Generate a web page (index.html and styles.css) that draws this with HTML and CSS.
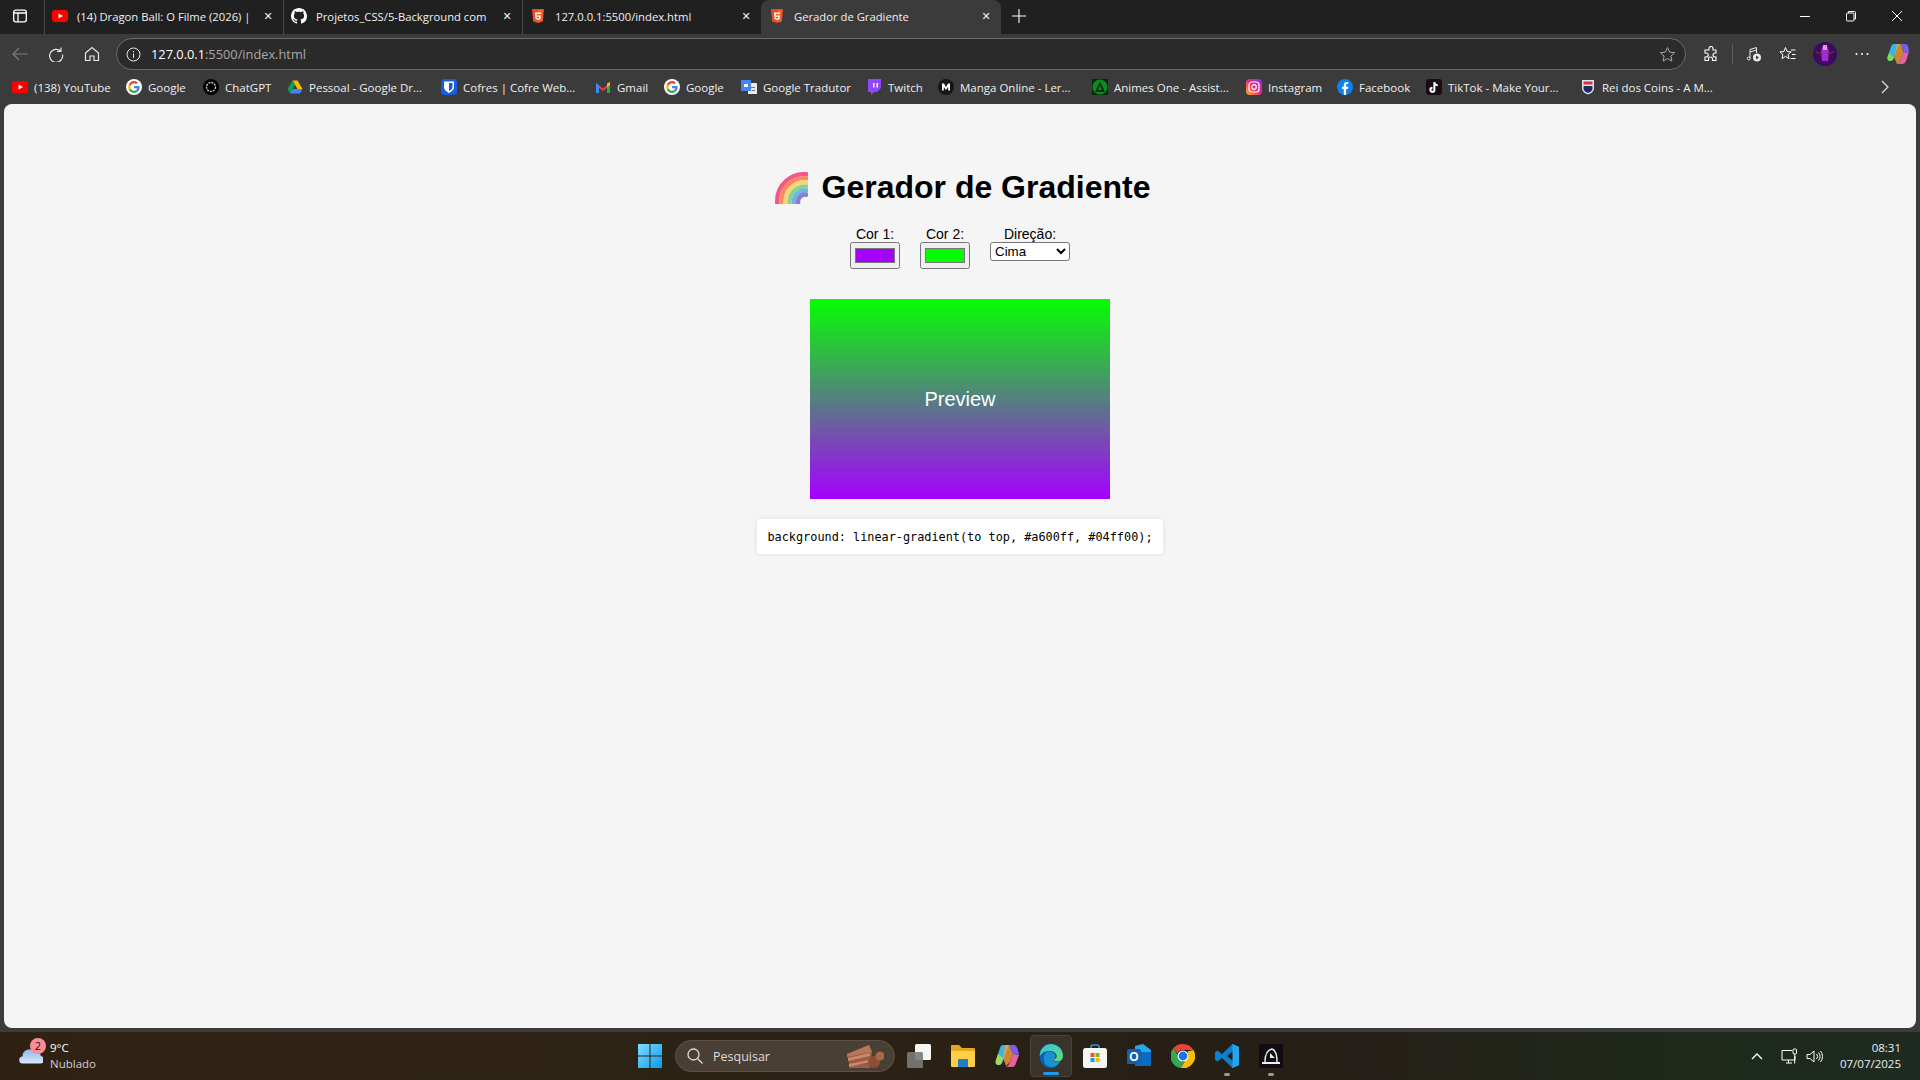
FILE: index.html
```html
<!DOCTYPE html>
<html lang="pt-BR">
<head>
<meta charset="UTF-8" />
<title>Gerador de Gradiente</title>
<link rel="stylesheet" href="styles.css">
</head>
<body>
<svg class="sprites" width="0" height="0">
  <symbol id="html5" viewBox="0 0 16 16"><path fill="#e44d26" d="M2 1h12l-1.100 12.400L8 15l-4.900-1.600z"/><path fill="#f16529" d="M8 2v12l4-1.200L13 2z"/><path fill="#fff" d="M5 4.500h6l-.1 1.500H6.600l.1 1.500h4.100l-.3 3.600L8 11.900l-2.500-.8-.2-1.900h1.400l.1 1 1.200.3 1.200-.3.1-1.400H5.300z"/></symbol>
  <symbol id="google" viewBox="0 0 16 16"><circle cx="8" cy="8" r="8" fill="#fff"/><path fill="#4285f4" d="M13.600 8.200c0-.4 0-.8-.1-1.200H8v2.300h3.200c-.1.800-.6 1.400-1.200 1.800l1.900 1.500c1.100-1 1.700-2.500 1.700-4.400z"/><path fill="#34a853" d="M8 14c1.600 0 3-.5 3.900-1.400L10 11.100c-.5.400-1.200.6-2 .6-1.500 0-2.800-1-3.300-2.400L2.800 10.800C3.800 12.700 5.700 14 8 14z"/><path fill="#fbbc05" d="M4.700 9.300c-.3-.8-.3-1.800 0-2.600L2.800 5.200c-.8 1.600-.8 4 0 5.600z"/><path fill="#ea4335" d="M8 4.300c.9 0 1.600.3 2.200.9l1.700-1.700C10.900 2.600 9.600 2 8 2 5.700 2 3.800 3.300 2.800 5.200l1.900 1.500C5.200 5.300 6.500 4.300 8 4.300z"/></symbol>
</svg>

<div class="tabstrip">
  <span class="tab-menu">
    <svg width="16" height="16" viewBox="0 0 16 16" fill="none" stroke="#fff" stroke-width="1.300"><rect x="1.700" y="2.200" width="12.600" height="11.600" rx="2"/><path d="M1.700 5h12.600M6 5v8.800"/></svg>
  </span>
  <div class="tab">
    <svg class="fav" viewBox="0 0 16 16"><rect y="2" width="16" height="12" rx="3" fill="#f00"/><path fill="#fff" d="M6.500 5.500v5L11 8z"/></svg>
    <span class="tab-title">(14) Dragon Ball: O Filme (2026) |</span>
    <span class="tab-x">✕</span>
  </div>
  <div class="tab">
    <svg class="fav" viewBox="0 0 16 16"><path fill="#fff" d="M8 0C3.580 0 0 3.580 0 8c0 3.540 2.290 6.530 5.470 7.590.4.070.55-.17.55-.38 0-.19-.01-.82-.01-1.490-2.010.37-2.530-.49-2.690-.94-.09-.23-.48-.94-.82-1.130-.28-.15-.68-.52-.01-.53.630-.01 1.080.58 1.230.82.720 1.210 1.870.87 2.330.66.070-.52.280-.87.510-1.070-1.780-.2-3.640-.89-3.640-3.950 0-.87.310-1.590.820-2.150-.08-.2-.36-1.020.08-2.120 0 0 .67-.21 2.200.82.640-.18 1.320-.27 2-.27s1.360.09 2 .27c1.530-1.040 2.200-.82 2.200-.82.440 1.100.16 1.920.08 2.120.51.560.82 1.270.82 2.150 0 3.070-1.870 3.750-3.650 3.950.29.25.54.73.54 1.480 0 1.070-.01 1.930-.01 2.200 0 .21.150.46.550.38A8.010 8.010 0 0 0 16 8c0-4.420-3.580-8-8-8z"/></svg>
    <span class="tab-title">Projetos_CSS/5-Background com</span>
    <span class="tab-x">✕</span>
  </div>
  <div class="tab">
    <svg class="fav"><use href="#html5"/></svg>
    <span class="tab-title">127.0.0.1:5500/index.html</span>
    <span class="tab-x">✕</span>
  </div>
  <div class="tab tab-active">
    <svg class="fav"><use href="#html5"/></svg>
    <span class="tab-title">Gerador de Gradiente</span>
    <span class="tab-x">✕</span>
  </div>
  <svg class="tab-new" width="16" height="16" viewBox="0 0 16 16" stroke="#fff" stroke-width="1.100"><path d="M8 1v14M1 8h14"/></svg>
  <div class="win-controls">
    <svg width="12" height="12" viewBox="0 0 12 12" stroke="#fff" fill="none"><path d="M1 6.500h10"/></svg>
    <svg width="12" height="12" viewBox="0 0 12 12" stroke="#fff" fill="none"><rect x="1.500" y="3" width="7.500" height="8" rx="1"/><path d="M3.500 3V1.500h6a1 1 0 0 1 1 1V9H9"/></svg>
    <svg width="12" height="12" viewBox="0 0 12 12" stroke="#fff" fill="none"><path d="M1 1l10 10M11 1L1 11"/></svg>
  </div>
</div>

<div class="toolbar">
  <svg class="tb-back" width="16" height="16" viewBox="0 0 16 16" fill="none" stroke="#7d7d7d" stroke-width="1.200"><path d="M15.500 8H1M7 2L1 8l6 6"/></svg>
  <svg class="tb-reload" width="16" height="16" viewBox="0 0 16 16" fill="none" stroke="#e8e8e8" stroke-width="1.200"><path d="M13 1.500v4H9M13 5.500A6.500 6.500 0 1 0 14.500 8.500"/></svg>
  <svg class="tb-home" width="16" height="16" viewBox="0 0 16 16" fill="none" stroke="#e8e8e8" stroke-width="1.200"><path d="M1.500 7L8 1.500 14.500 7v7.500H10V10H6v4.500H1.500z"/></svg>
  <div class="urlbar">
    <svg width="15" height="15" viewBox="0 0 15 15" fill="none" stroke="#e8e8e8"><circle cx="7.500" cy="7.500" r="6.500"/><path d="M7.500 6.500v4.500M7.500 4v1.300"/></svg>
    <span class="url"><span class="url-host">127.0.0.1</span>:5500/index.html</span>
    <svg class="url-star" width="17" height="17" viewBox="0 0 17 17" fill="none" stroke="#a8a8a8"><path d="M8.500 1.500l2.100 4.600 5 .6-3.700 3.400 1 5-4.400-2.500-4.400 2.500 1-5L1.400 6.700l5-.6z"/></svg>
  </div>
  <div class="tb-right">
    <svg width="16" height="16" viewBox="0 0 16 16" fill="none" stroke="#fff" stroke-width="1.100"><path d="M6 2.500a2 2 0 0 1 4 0V4h3v3h-1a2 2 0 0 0 0 4h1v3.500h-3.500V13a2 2 0 0 0-4 0v1.500H2V11h1.200a2 2 0 0 0 0-4H2V4h4z"/></svg>
    <span class="tb-sep"></span>
    <svg width="16" height="16" viewBox="0 0 16 16" fill="none" stroke="#e8e8e8"><path d="M4 12V3.500L10.500 1.500V7"/><circle cx="2.800" cy="12.500" r="1.500"/><path d="M4 6l6.500-2"/><circle cx="11" cy="11.500" r="4" fill="#e8e8e8" stroke="none"/><path d="M10 9.500v4l3-2z" fill="#3b3b3b" stroke="none"/></svg>
    <svg width="17" height="17" viewBox="0 0 17 17" fill="none" stroke="#fff"><path d="M6.500 1.500l1.600 4 4 .4-3 2.700.9 4-3.500-2.200-3.500 2.200.9-4-3-2.700 4-.4z"/><path d="M12 4h4.500M13 8.500h3.500M11.500 12.500h5"/></svg>
    <svg width="24" height="24" viewBox="0 0 24 24"><circle cx="12" cy="12" r="12" fill="#3d0a63"/><path fill="#a02bd0" d="M9 5h6l1 5-1 9H9l-1-9z"/><path fill="#e39ad6" d="M10 3h4v5h-4z"/><path fill="#6b2a1e" d="M3 9l6 2v2L3 11zM21 9l-6 2v2l6-2z"/></svg>
    <svg width="16" height="16" viewBox="0 0 16 16" fill="#fff"><circle cx="2.500" cy="8" r="1"/><circle cx="8" cy="8" r="1"/><circle cx="13.500" cy="8" r="1"/></svg>
    <svg width="22" height="22" viewBox="0 0 22 22"><path fill="#36b6e8" d="M7 1h5L7 14c-1 3-2 4-4 4-2 0-3-2-2.500-4L4 4c.5-2 1.500-3 3-3z"/><path fill="#7ed957" d="M3 18c-2 0-3-2-2.500-4L2 10l5 4c-1 3-2 4-4 4z"/><path fill="#e85fa3" d="M10 21h5c2 0 3-1 4-3l2.500-8-5-1-3 8c-.7 2-2 4-3.500 4z"/><path fill="#7b5cf0" d="M18 1c2 0 3 2 3.500 4l.5 5-5-1-3-8z"/><path fill="#f6a13a" d="M14 1H10L7 14l3 7c1.500 0 2.800-2 3.500-4l3-8z" opacity=".75"/></svg>
  </div>
</div>

<div class="bookmarks">
  <a class="bm bm-youtube"><svg class="fav" viewBox="0 0 16 16"><rect y="2" width="16" height="12" rx="3" fill="#f00"/><path fill="#fff" d="M6.500 5.500v5L11 8z"/></svg>(138) YouTube</a>
  <a class="bm bm-google"><svg class="fav"><use href="#google"/></svg>Google</a>
  <a class="bm bm-chatgpt"><svg class="fav" viewBox="0 0 16 16"><circle cx="8" cy="8" r="8" fill="#000"/><circle cx="8" cy="8" r="4.500" fill="none" stroke="#ccc" stroke-width="1.300" stroke-dasharray="2 1"/></svg>ChatGPT</a>
  <a class="bm"><svg class="fav" viewBox="0 0 16 16"><path fill="#ffba00" d="M5.500 1.500h5L15.500 10h-5z"/><path fill="#0f9d58" d="M5.500 1.500L.5 10l2.500 4.500L8 6z"/><path fill="#4285f4" d="M3 14.500h10L15.500 10h-10z"/></svg>Pessoal - Google Dr...</a>
  <a class="bm"><svg class="fav" viewBox="0 0 16 16"><rect width="16" height="16" rx="3" fill="#175ddc"/><path fill="#fff" d="M3 2.500h10V8c0 3-2.500 4.500-5 6-2.500-1.500-5-3-5-6z"/><path fill="#175ddc" d="M8 4h3.500v4c0 2-1.800 3-3.500 4z"/></svg>Cofres | Cofre Web...</a>
  <a class="bm bm-gmail"><svg class="fav" viewBox="0 0 16 16"><path fill="#ea4335" d="M1 4l7 5.500L15 4v2.500L8 12 1 6.500z"/><path fill="#4285f4" d="M1 4v10h3V6.500z"/><path fill="#34a853" d="M15 4v10h-3V6.500z"/><path fill="#fbbc05" d="M12 4.500L15 3v3l-3 2.500z"/></svg>Gmail</a>
  <a class="bm bm-google"><svg class="fav"><use href="#google"/></svg>Google</a>
  <a class="bm bm-tradutor"><svg class="fav" viewBox="0 0 16 16"><path fill="#e8eaed" d="M7 4h8a1 1 0 0 1 1 1v10H7z"/><path fill="#4285f4" d="M1 1h9v11H1a1 1 0 0 1-1-1V2a1 1 0 0 1 1-1z"/><path fill="#fff" d="M3 5h4v3H3z"/><path fill="#777" d="M10 8h4v1h-4zM11 11h3v1h-3z"/></svg>Google Tradutor</a>
  <a class="bm bm-twitch"><svg class="fav" viewBox="0 0 16 16"><path fill="#9146ff" d="M2 0h13v9l-4 4H8l-3 3v-3H2z"/><path fill="#fff" d="M7 4h1.500v4.500H7zM10.500 4H12v4.500h-1.500z"/></svg>Twitch</a>
  <a class="bm"><svg class="fav" viewBox="0 0 16 16"><circle cx="8" cy="8" r="8" fill="#161616"/><path fill="#fff" d="M4 4.500h2L8 8l2-3.500h2v7h-1.800V8L8 11 5.800 8v3.500H4z"/></svg>Manga Online - Ler...</a>
  <a class="bm"><svg class="fav" viewBox="0 0 16 16"><rect width="16" height="16" fill="#062b0d"/><circle cx="8" cy="8" r="7.500" fill="#0d8a22"/><path fill="#04300e" d="M8 2.500L13 13H3z"/><path fill="#0d8a22" d="M8 6.500l2 4.500H6z"/></svg>Animes One - Assist...</a>
  <a class="bm bm-insta"><svg class="fav" viewBox="0 0 16 16"><defs><linearGradient id="insta" x1="0" y1="1" x2="1" y2="0"><stop offset="0" stop-color="#fdb01f"/><stop offset=".5" stop-color="#ee2a7b"/><stop offset="1" stop-color="#7b2ff7"/></linearGradient></defs><rect width="16" height="16" rx="4" fill="url(#insta)"/><rect x="3" y="3" width="10" height="10" rx="3" fill="none" stroke="#fff" stroke-width="1.200"/><circle cx="8" cy="8" r="2.300" fill="none" stroke="#fff" stroke-width="1.200"/></svg>Instagram</a>
  <a class="bm bm-face"><svg class="fav" viewBox="0 0 16 16"><circle cx="8" cy="8" r="8" fill="#0c82ee"/><path fill="#fff" d="M6.800 16V10H5V7.700h1.800V6c0-2 1.200-3 3-3l1.500.1v2h-1c-1 0-1.200.5-1.200 1.100v1.500h2.200l-.3 2.300H9.100v6z"/></svg>Facebook</a>
  <a class="bm"><svg class="fav" viewBox="0 0 16 16"><rect width="16" height="16" rx="3" fill="#1a0b14"/><path fill="none" stroke="#25f4ee" stroke-width="1.600" d="M8 3v7.500a2 2 0 1 1-2-2M8 3c.3 1.800 1.500 2.800 3.200 3"/><path fill="none" stroke="#fff" stroke-width="1.600" d="M8.600 3.400v7.500a2 2 0 1 1-2-2M8.600 3.400c.3 1.800 1.500 2.800 3.200 3"/></svg>TikTok - Make Your...</a>
  <a class="bm"><svg class="fav" viewBox="0 0 16 16"><path fill="#dfe6f2" d="M2 1h12v8c0 3.500-3 5.500-6 6.500C5 14.500 2 12.500 2 9z"/><path fill="#d6323a" d="M3.500 2.500h9v3h-9z"/><path fill="#1d2b5e" d="M3.500 7h9v2.500c0 2-2 3.500-4.500 4.500-2.500-1-4.500-2.500-4.500-4.500z"/></svg>Rei dos Coins - A M...</a>
  <svg class="bm-more" width="12" height="16" viewBox="0 0 12 16" fill="none" stroke="#e0e0e0" stroke-width="1.200"><path d="M3 2l6 6-6 6"/></svg>
</div>

<main class="page">
  <h1 class="title">
    <svg class="rainbow" width="33" height="32" viewBox="0 0 33 32" fill="none" stroke-width="4.200">
      <path stroke="#f4568a" d="M2.100 32V29A27 27 0 0 1 33 2.400"/>
      <path stroke="#fb8a5c" d="M6.300 32V29A23 23 0 0 1 33 6.600"/>
      <path stroke="#fdd27a" d="M10.500 32V29A19 19 0 0 1 33 10.800"/>
      <path stroke="#83d68d" d="M14.700 32V29A15 15 0 0 1 33 15"/>
      <path stroke="#6fb3e8" d="M18.900 32V29A11 11 0 0 1 33 19.200"/>
      <path stroke="#8d7bd0" d="M23.100 32V29A7 7 0 0 1 33 23.400"/>
    </svg>
    <span>Gerador de Gradiente</span>
  </h1>

  <div class="controls">
    <label class="field">Cor 1:
      <input type="color" value="#a600ff">
    </label>
    <label class="field">Cor 2:
      <input type="color" value="#00ff00">
    </label>
    <label class="field">Direção:
      <select class="direction">
        <option>Cima</option>
        <option>Baixo</option>
        <option>Esquerda</option>
        <option>Direita</option>
      </select>
    </label>
  </div>

  <div class="preview">Preview</div>

  <code class="css-output">background: linear-gradient(to top, #a600ff, #04ff00);</code>
</main>

<footer class="taskbar">
  <div class="weather">
    <svg class="weather-icon" width="24" height="18" viewBox="0 0 24 18"><defs><linearGradient id="cloud" x1="0" y1="0" x2="0" y2="1"><stop offset="0" stop-color="#8fb6ee"/><stop offset="1" stop-color="#dce9fb"/></linearGradient></defs><path fill="url(#cloud)" d="M4 17.500a3.500 3.500 0 0 1-.5-7A7 7 0 0 1 16 6a5 5 0 0 1 6 4 3.800 3.800 0 0 1-1 7.500z"/></svg>
    <span class="weather-badge">2</span>
    <div class="weather-text">
      <span class="temp">9°C</span>
      <span class="sky">Nublado</span>
    </div>
  </div>

  <div class="task-apps">
    <svg class="task-icon" viewBox="0 0 24 24"><defs><linearGradient id="win" x1="0" y1="0" x2="1" y2="1"><stop offset="0" stop-color="#7fdcff"/><stop offset="1" stop-color="#0a9bf0"/></linearGradient></defs><path fill="url(#win)" d="M0 0h11.500v11.500H0zM12.500 0H24v11.500H12.500zM0 12.500h11.500V24H0zM12.500 12.500H24V24H12.500z"/></svg>
    <div class="search">
      <svg width="16" height="16" viewBox="0 0 16 16" fill="none" stroke="#ddd" stroke-width="1.300"><circle cx="6.500" cy="6.500" r="5.500"/><path d="M10.500 10.500l5 5"/></svg>
      <span>Pesquisar</span>
      <svg class="cake" width="37" height="24" viewBox="0 0 37 24"><path fill="#9a5d43" d="M0 10L22 1l3 7-2 16H3z"/><path fill="#c98a6a" d="M1 14l22-5v3L1 17zM2 20l20-4v2L2 23z"/><path fill="#b87758" d="M0 10L22 1l3 7-25 5z"/><circle cx="27" cy="18" r="6" fill="#8d5034"/><circle cx="33" cy="12" r="4.500" fill="#a8694a"/></svg>
    </div>
    <svg class="task-icon" viewBox="0 0 24 24"><rect x="8" width="16" height="16" rx="1.500" fill="#f6f6f6"/><rect y="8" width="16" height="16" rx="1.500" fill="#7a7a7a" opacity=".9"/></svg>
    <svg class="task-icon" viewBox="0 0 24 24"><path fill="#e6a91e" d="M0 2a1 1 0 0 1 1-1h7l3 3h12a1 1 0 0 1 1 1v3H0z"/><path fill="#ffcf48" d="M0 7h24v15a1 1 0 0 1-1 1H1a1 1 0 0 1-1-1z"/><path fill="#1f7fc7" d="M8 15h8a1 1 0 0 1 1 1v7H7v-7a1 1 0 0 1 1-1z"/></svg>
    <svg class="task-icon" viewBox="0 0 24 24"><path fill="#36b6e8" d="M8 1h6L8 17c-1 3-2 4-4 4-3 0-4-2-3-5L5 4c.5-2 1.500-3 3-3z"/><path fill="#a4d65e" d="M1 16l2-6 5 4-1 3c-1 3-2 4-3 4-3 0-4-2-3-5z"/><path fill="#e85fa3" d="M10 23h7c2 0 3-1 4-4l3-8-6-1-3 8c-1 3-3 5-5 5z"/><path fill="#7b5cf0" d="M19 1c2 0 3 2 4 5l1 5-6-1-4-9z"/><path fill="#f6a13a" d="M14 1h-4L8 14l3 8 4-4 3-8z" opacity=".8"/></svg>
    <div class="task-active">
      <svg class="task-icon" viewBox="0 0 24 24"><defs><linearGradient id="edge" x1="0" y1="0" x2="1" y2="1"><stop offset="0" stop-color="#2fc3e8"/><stop offset="1" stop-color="#5ddc7a"/></linearGradient></defs><path fill="url(#edge)" d="M12 0a12 12 0 0 1 12 12c0 3-2 5.500-5.500 5.500-2.500 0-4-1-4-2.500 3 0 3.500-2 3-4-1-3-5-4.500-8-4C5 7.500 2 10 .8 13 .2 6 5 0 12 0z"/><path fill="#0f5fb0" d="M.8 13C2 9.500 5.500 7 9 7.500c-3 1-4.500 4-4 7.500.5 4 4 8 9.500 8.500C6.500 25 1 20 .8 13z"/><path fill="#1a8fd6" d="M9 7.500c3.500-.5 6 1 7 2.500 1.500 2.500 0 5-1.500 5-.5 2 1.500 3 4 3 1 0 2.500-.5 3-1-2 4-5 6-8 6.500C8 23 4.500 19 5 15c-.5-3.500 1-6.500 4-7.500z"/></svg>
      <span class="task-line"></span>
    </div>
    <svg class="task-icon" viewBox="0 0 24 24"><path fill="none" stroke="#1c9be6" stroke-width="1.600" d="M8 5V3a2 2 0 0 1 2-2h4a2 2 0 0 1 2 2v2"/><rect y="4" width="24" height="20" rx="2.500" fill="#f5f5f5"/><path fill="#f25022" d="M7.500 9h4v4h-4z"/><path fill="#7fba00" d="M12.500 9h4v4h-4z"/><path fill="#00a4ef" d="M7.500 14h4v4h-4z"/><path fill="#ffb900" d="M12.500 14h4v4h-4z"/></svg>
    <svg class="task-icon" viewBox="0 0 24 24"><path fill="#28a8ea" d="M8 2l8-2 8 6v14a2 2 0 0 1-2 2H8z"/><path fill="#0a6cbe" d="M8 8h16v14H8z"/><rect y="5" width="14" height="15" rx="1.500" fill="#0f5fb5"/><text class="outlook-o" x="7" y="16.500">O</text></svg>
    <svg class="task-icon" viewBox="0 0 24 24"><path fill="#ea4335" d="M12 0a12 12 0 0 1 10.400 6H12a6 6 0 0 0-5.600 3.700L2.600 4A12 12 0 0 1 12 0z"/><path fill="#34a853" d="M2.600 4l4.500 8a6 6 0 0 0 6.500 5.800L10 24A12 12 0 0 1 2.600 4z"/><path fill="#fbbc05" d="M22.400 6A12 12 0 0 1 10 24l4.900-8.500A6 6 0 0 0 16.300 7.600L22.400 6z"/><circle cx="12" cy="12" r="5.500" fill="#fff"/><circle cx="12" cy="12" r="4.400" fill="#1a73e8"/></svg>
    <div class="task-open">
      <svg class="task-icon" viewBox="0 0 24 24"><path fill="#0f7fd0" d="M17.500 0L24 3v18l-6.500 3L7 14l-4.500 3.500L0 16V8l2.500-1.500L7 10zM18 7l-6 5 6 5z"/><path fill="#23a5f0" d="M17.500 0L24 3v18l-6.500 3z"/></svg>
      <span class="task-dot"></span>
    </div>
    <div class="task-open">
      <svg class="task-icon" viewBox="0 0 24 24"><rect width="24" height="24" rx="1" fill="#0c0c12"/><path fill="none" stroke="#f0f0f0" stroke-width="1.400" d="M6 18c0-6 2-12 7-13 3 1 5 6 5 13"/><path fill="#f0f0f0" d="M3 18h18v2H3zM11 9l5 5h-5z"/></svg>
      <span class="task-dot"></span>
    </div>
  </div>

  <div class="tray">
    <svg width="12" height="8" viewBox="0 0 12 8" fill="none" stroke="#fff" stroke-width="1.400"><path d="M1 7l5-5 5 5"/></svg>
    <svg class="tray-net" width="17" height="17" viewBox="0 0 17 17" fill="none" stroke="#fff"><path d="M11 2.500H1v9.500h13V8M5 15h6M7.500 12v3"/><rect x="12" y="1" width="3.500" height="5" rx="1"/><path d="M13.700 6v9.500"/></svg>
    <svg width="17" height="17" viewBox="0 0 17 17" fill="none" stroke="#fff"><path d="M1 6.500h3L8 3v11L4 10.500H1zM10.500 6a3.500 3.500 0 0 1 0 5M12.500 4.500a6 6 0 0 1 0 8M14.500 3a8.500 8.500 0 0 1 0 11"/></svg>
    <div class="clock">
      <span>08:31</span>
      <span>07/07/2025</span>
    </div>
  </div>
</footer>
</body>
</html>
```

FILE: styles.css
```css
* { box-sizing: border-box; }
html, body { height: 100%; }
body { margin: 0; display: flex; flex-direction: column; height: 100vh; overflow: hidden; background: #3b3b3b; font-family: "Open Sans", "Noto Sans", sans-serif; color: #fff; }
.sprites { position: absolute; }
.fav { width: 16px; height: 16px; flex: none; }

/* barra de abas */
.tabstrip { display: flex; align-items: center; height: 34px; background: #202020; flex: none; }
.tab-menu { width: 44px; display: flex; padding: 0 0 2px 12px; }
.tab { display: flex; align-items: center; width: 239px; height: 34px; padding: 0 8px 2px 7px; gap: 9px; font-size: 11.25px; border-left: 1px solid #4c4c4c; background: #202020; }
.tab-title { flex: 1; white-space: nowrap; overflow: hidden; color: #f0f0f0; }
.tab-x { width: 14px; text-align: center; font-size: 11px; color: #f0f0f0; font-family: "DejaVu Sans", sans-serif; }
.tab-active { background: #3b3b3b; border-left: none; border-radius: 8px 8px 0 0; width: 240px; padding-left: 8px; }
.tab-new { margin: 0 0 2px 10px; }
.win-controls { margin-left: auto; display: flex; gap: 34px; padding: 0 17px 2px 0; }

/* barra de endereco */
.toolbar { display: flex; align-items: center; height: 36px; padding-top: 4px; padding-left: 12px; flex: none; }
.tb-reload { margin-left: 20px; }
.tb-home { margin-left: 20px; }
.urlbar { display: flex; align-items: center; flex: none; margin-left: 16px; width: 1570px; height: 32px; background: #2b2b2b; border: 1px solid #6a6a6a; border-radius: 16px; padding: 0 9px; gap: 10px; }
.url { font-size: 12.8px; color: #a8a8a8; }
.url-host { color: #fff; }
.url-star { margin-left: auto; }
.tb-right { display: flex; align-items: center; flex: none; margin-left: 17px; gap: 17px; }
.tb-sep { width: 1px; height: 20px; background: #5c5c5c; margin: 0 -4px; }

/* favoritos */
.bookmarks { display: flex; align-items: center; height: 34px; padding-left: 12px; font-size: 11.5px; flex: none; position: relative; }
.bm { display: flex; flex: none; align-items: center; width: 154px; gap: 6px; white-space: nowrap; color: #f0f0f0; }
.bm-youtube { width: 114px; }
.bm-google { width: 77px; }
.bm-chatgpt { width: 84px; }
.bm-gmail { width: 69px; }
.bm-tradutor { width: 125px; }
.bm-twitch { width: 72px; }
.bm-insta { width: 91px; }
.bm-face { width: 89px; }
.bm-more { position: absolute; right: 29px; top: 9px; }

/* pagina */
.page { flex: 1; margin: 0 4px; background: #f5f5f5; border-radius: 8px; color: #000; font-family: "Liberation Sans", Arial, sans-serif; display: flex; flex-direction: column; align-items: center; padding-top: 65px; min-height: 0; }
.title { display: flex; align-items: center; margin: 0; font-size: 32px; line-height: 37px; font-weight: bold; }
.rainbow { margin: 0 14px 0 5px; }
.controls { display: flex; justify-content: center; gap: 20px; margin-top: 21px; font-size: 14px; }
.field { display: flex; flex-direction: column; align-items: center; line-height: 15px; width: 80px; }
.field:nth-child(-n+2) { width: 50px; }
.field input { margin: 0; width: 50px; height: 27px; }
.direction { width: 80px; height: 19px; font-family: "Liberation Sans", Arial, sans-serif; font-size: 13.33px; background: #fff; color: #000; border: 1px solid #767676; border-radius: 3px; }
.preview { width: 300px; height: 200px; margin-top: 30px; display: flex; align-items: center; justify-content: center; background: linear-gradient(to top, #a600ff, #04ff00); color: #fff; font-size: 20px; }
.css-output { margin-top: 20px; padding: 11px 10px 9px; background: #fff; border-radius: 2px; box-shadow: 0 0 5px rgba(0, 0, 0, 0.1); font-family: "DejaVu Sans Mono", monospace; font-size: 11.85px; line-height: 15px; white-space: nowrap; }

/* barra de tarefas */
.taskbar { display: flex; align-items: center; height: 48px; margin-top: 4px; flex: none; position: relative; background: linear-gradient(to right, #2f2213, #2e2415 30%, #2a2014 50%, #251f18 70%, #1e2a1c 90%, #1f2a22); }
.weather { position: relative; display: flex; align-items: center; width: 638px; padding-left: 19px; gap: 7px; }
.weather-badge { position: absolute; left: 30px; top: -2px; width: 16px; height: 16px; border-radius: 50%; background: #ff8b95; color: #111; font-size: 11px; line-height: 16px; text-align: center; }
.weather-icon { margin-top: -3px; }
.weather-text { display: flex; flex-direction: column; font-size: 11.5px; line-height: 16px; }
.sky { color: #d0d0d0; }
.task-apps { display: flex; align-items: center; gap: 20px; }
.task-icon { width: 24px; height: 24px; display: block; }
.search { display: flex; align-items: center; width: 220px; height: 32px; margin: 0 -8px 0 -7px; padding: 0 10px 0 11px; gap: 10px; border-radius: 16px; background: #4a3f34; border: 1px solid #5c5145; color: #ddd; font-size: 12.5px; }
.cake { margin-left: auto; }
.task-active { position: relative; padding: 8px; margin: -9px; background: #3a332c; border: 1px solid #4a443c; border-radius: 4px; }
.task-line { position: absolute; left: 12px; right: 12px; bottom: 1px; height: 3px; border-radius: 2px; background: #1a9cf0; }
.task-open { position: relative; }
.task-dot { position: absolute; left: 9px; bottom: -8px; width: 6px; height: 3px; border-radius: 2px; background: #9a9a9a; }
.outlook-o { fill: #fff; font-size: 12px; font-weight: bold; font-family: "Liberation Sans", sans-serif; text-anchor: middle; }
.tray { position: absolute; right: 19px; top: 0; height: 48px; display: flex; align-items: center; gap: 14px; }
.tray-net { margin-left: 4px; margin-right: -6px; }
.clock { display: flex; flex-direction: column; align-items: flex-end; margin-left: 3px; font-size: 11.5px; line-height: 16px; color: #eee; }
```
